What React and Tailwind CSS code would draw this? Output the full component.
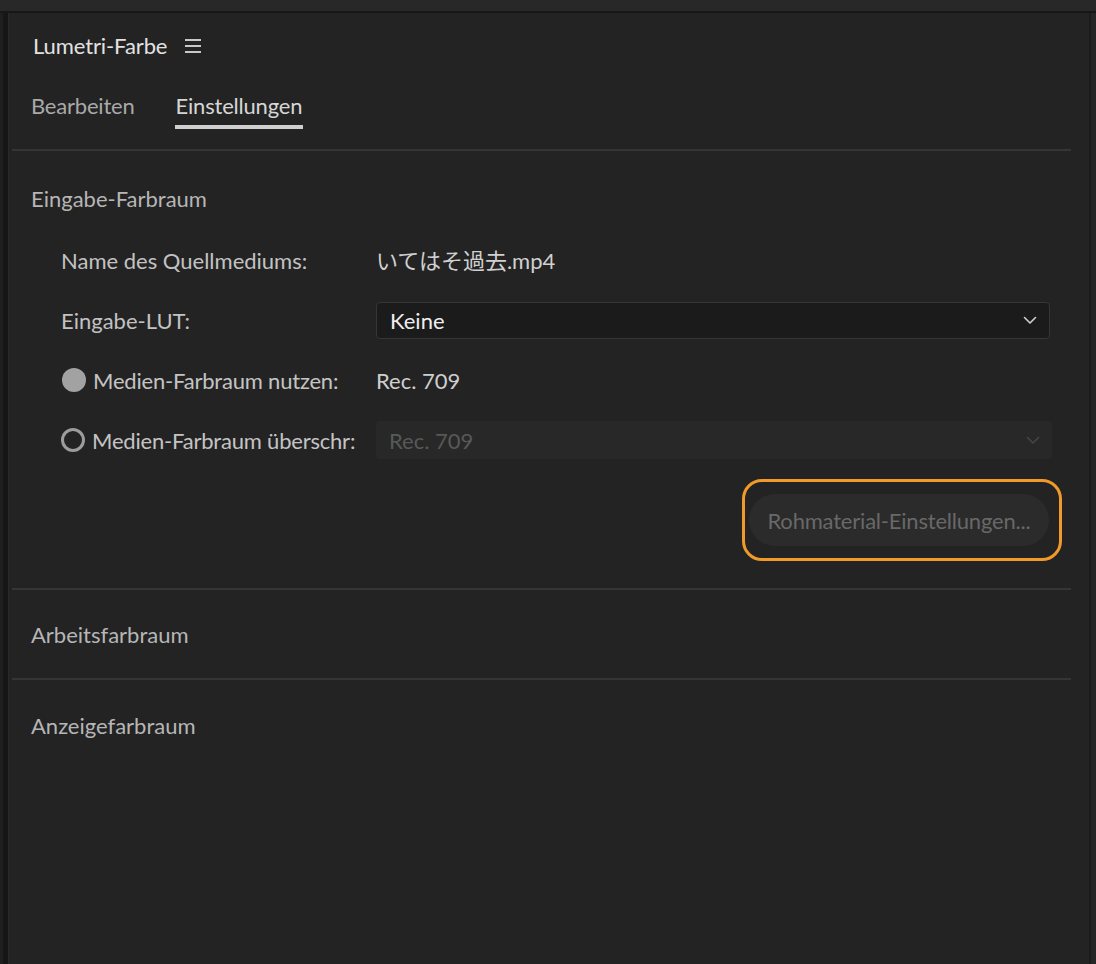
import React from "react";

const font = { fontFamily: "Lato, 'Noto Sans CJK JP', sans-serif" };

function Chevron({ className }) {
  return (
    <svg width="14" height="9" viewBox="0 0 14 9" className={className} fill="none">
      <path d="M1.5 1.5 L7 7 L12.5 1.5" stroke="currentColor" strokeWidth="1.6" strokeLinecap="round" strokeLinejoin="round" />
    </svg>
  );
}

function Divider() {
  return <div className="h-[2px] bg-[#353535] ml-[3px] mr-[18px]" />;
}

export default function App() {
  return (
    <div className="min-h-screen w-full bg-[#232323] flex flex-col" style={font}>
      <div className="h-[13px] bg-[#282828] border-b-2 border-[#171717]" />
      <div className="flex flex-1">
        <div className="w-[9px] flex shrink-0">
          <div className="w-[3px] bg-[#1f1f1f]" />
          <div className="w-[5px] bg-[#161616]" />
          <div className="w-[1px] bg-[#2a2a2a]" />
        </div>
        <div className="flex-1 flex flex-col bg-[#232323]">
          {/* Title */}
          <div className="flex items-center h-[30px] mt-[18px] pl-[24px] gap-[18px]">
            <span className="text-[22px] leading-[30px] text-[#e2e2e2] tracking-[-0.1px]">Lumetri-Farbe</span>
            <svg width="16" height="14" viewBox="0 0 16 14" className="text-[#c8c8c8]">
              <rect x="0" y="0" width="16" height="2" fill="currentColor" />
              <rect x="0" y="6" width="16" height="2" fill="currentColor" />
              <rect x="0" y="12" width="16" height="2" fill="currentColor" />
            </svg>
          </div>
          {/* Tabs */}
          <div className="flex mt-[30px] pl-[22px] gap-[41px]">
            <div className="flex flex-col">
              <span className="text-[22px] leading-[30px] text-[#a9a9a9] tracking-[-0.2px]">Bearbeiten</span>
            </div>
            <div className="flex flex-col">
              <span className="text-[22px] leading-[30px] text-[#d6d6d6] tracking-[-0.2px]">Einstellungen</span>
              <div className="mt-[4px] h-[4px] bg-[#cfcfcf] -mx-[1px]" />
            </div>
          </div>
          <div className="mt-[20px]">
            <Divider />
          </div>

          {/* Eingabe-Farbraum */}
          <div className="mt-[33px] pl-[22px] text-[22px] leading-[30px] text-[#b6b6b6]">Eingabe-Farbraum</div>
          <div className="mt-[16px] pl-[52px] pr-[39px] flex flex-col">
            <div className="h-[60px] flex items-center">
              <span className="w-[315px] shrink-0 text-[22px] text-[#c2c2c2]">Name des Quellmediums:</span>
              <span className="text-[22px] text-[#d0d0d0]">いてはそ過去.mp4</span>
            </div>
            <div className="h-[60px] flex items-center">
              <span className="w-[315px] shrink-0 text-[22px] text-[#c2c2c2]">Eingabe-LUT:</span>
              <div className="flex-1 h-[37px] rounded-[4px] bg-[#1b1b1b] border border-[#363636] flex items-center justify-between pl-[13px] pr-[12px]">
                <span className="text-[22px] text-[#efefef]">Keine</span>
                <Chevron className="text-[#d0d0d0]" />
              </div>
            </div>
            <div className="h-[60px] flex items-center">
              <div className="w-[315px] shrink-0 flex items-center gap-[7px]">
                <div className="w-[24px] h-[24px] rounded-full bg-[#a2a2a2] ml-[1px]" />
                <span className="text-[22px] text-[#c4c4c4] tracking-[-0.2px]">Medien-Farbraum nutzen:</span>
              </div>
              <span className="text-[22px] text-[#cfcfcf]">Rec. 709</span>
            </div>
            <div className="h-[60px] flex items-center">
              <div className="w-[315px] shrink-0 flex items-center gap-[7px]">
                <div className="w-[24px] h-[24px] rounded-full border-[3px] border-[#9c9c9c]" />
                <span className="text-[22px] text-[#c4c4c4] whitespace-nowrap tracking-[-0.2px]">Medien-Farbraum überschr:</span>
              </div>
              <div className="flex-1 h-[38px] rounded-[4px] bg-[#282828] flex items-center justify-between pl-[13px] pr-[12px] -mr-[2px]">
                <span className="text-[22px] text-[#585858]">Rec. 709</span>
                <Chevron className="text-[#454545]" />
              </div>
            </div>
          </div>
          <div className="flex justify-end pr-[27px] mt-[9px]">
            <div className="w-[320px] h-[82px] rounded-[20px] border-[3px] border-[#f09a2a] flex items-center pl-[4px] pr-[10px]">
              <div className="w-full h-[52px] rounded-full bg-[#2b2b2b] flex items-center justify-center">
                <span className="text-[22px] text-[#686868] tracking-[-0.2px]">Rohmaterial-Einstellungen...</span>
              </div>
            </div>
          </div>
          <div className="mt-[27px]">
            <Divider />
          </div>
          <div className="mt-[30px] pl-[22px] text-[22px] leading-[30px] text-[#b6b6b6]">Arbeitsfarbraum</div>
          <div className="mt-[28px]">
            <Divider />
          </div>
          <div className="mt-[31px] pl-[22px] text-[22px] leading-[30px] text-[#b6b6b6]">Anzeigefarbraum</div>
        </div>
        <div className="w-[7px] flex shrink-0">
          <div className="w-[2px] bg-[#1c1c1c]" />
          <div className="w-[5px] bg-[#262626]" />
        </div>
      </div>
    </div>
  );
}
